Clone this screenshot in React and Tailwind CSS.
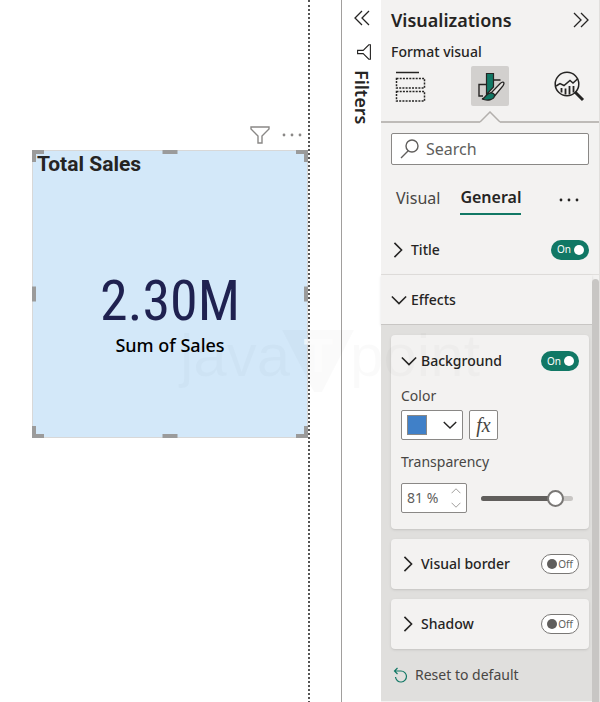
import React, { useState } from 'react';

const Chevron = ({ direction, className }) => {
  const paths = {
    right: "M5 1l8 8-8 8",
    down: "M1 5l8 8 8-8",
    up: "M1 13l8-8 8 8"
  };

  return (
    <svg className={className} fill="none" stroke="currentColor" viewBox="0 0 18 18">
      <path strokeWidth={1.8} d={paths[direction]} />
    </svg>
  );
};

const DoubleChevron = ({ left }) => (
  <svg className="w-4 h-4" fill="none" stroke="currentColor" strokeWidth={1.3} viewBox="0 0 16 16">
    <path d={left ? "M8 1L1 8l7 7M15 1L8 8l7 7" : "M1 1l7 7-7 7M8 1l7 7-7 7"} />
  </svg>
);

const Dots = () => (
  <svg className="w-5 h-4" fill="currentColor" viewBox="0 0 20 16">
    <circle cx="2" cy="8" r="1.4" />
    <circle cx="10" cy="8" r="1.4" />
    <circle cx="18" cy="8" r="1.4" />
  </svg>
);

const FieldsIcon = () => (
  <svg className="w-8 h-8" fill="none" stroke="#252423" viewBox="0 0 32 32">
    <path d="M1 2.500h23" strokeWidth="1.5" />
    <path d="M1.500 8.500h28v9.500h-28zM1.500 21.500h28v9.500h-28z" strokeWidth="1.5" strokeDasharray="2 1.200" />
  </svg>
);

const PaintIcon = () => (
  <svg className="w-8 h-8" fill="none" stroke="#252423" viewBox="0 0 32 32">
    <path d="M12 14.500H5V26h4M20 10h6.500" strokeWidth="1.4" />
    <path d="M12.500 3.500h7V17l-7 7.500z" fill="#117865" strokeWidth="1.2" />
    <path d="M29.500 12.300c1 .8.300 2.200-.4 3.400L21 25.500l-3.800-2.700 9-9.300c1.200-1.200 2.400-1.800 3.300-1.200z" fill="#e6e4e2" strokeWidth="1.3" />
    <path d="M16.500 22.800c2.300-.2 4.200 1.200 4 3.200-.7 3.800-7 5.200-12.500 3 3.700-.4 3.700-5.800 8.500-6.200z" fill="#117865" strokeWidth="1.3" />
  </svg>
);

const AnalyticsIcon = () => (
  <svg className="w-8 h-8" fill="none" stroke="#252423" viewBox="0 0 32 32">
    <circle cx="14" cy="14" r="11.800" strokeWidth="1.5" />
    <path d="M3 16l4-2.500 4 2 6-5 3 2.500 5-4.500" strokeWidth="1.5" />
    <path d="M8.500 18v4.500M12.500 18.500v6M16.500 16v8.500M20.500 16v6.500" strokeWidth="1.8" />
    <path d="M22 22l8 8" strokeWidth="3" />
  </svg>
);

const FilterIcon = ({ className }) => (
  <svg className={className} fill="none" stroke="currentColor" viewBox="0 0 20 18">
    <path strokeWidth={1.4} d="M1 1h18v2l-7 7v7H8v-7L1 3z" />
  </svg>
);

const Toggle = ({ label, defaultOn }) => {
  const [on, setOn] = useState(defaultOn);

  return (
    <button
      role="switch"
      aria-checked={on}
      aria-label={label}
      onClick={() => setOn(!on)}
      className={
        on
          ? "flex items-center justify-between w-[38px] h-5 pl-1.5 pr-[5px] rounded-full bg-[#117865] text-white text-[10px]"
          : "flex flex-row-reverse items-center justify-between w-[38px] h-5 px-[5px] rounded-full border border-[#797775] bg-white text-[#605e5c] text-[10px]"
      }
    >
      <span>{on ? 'On' : 'Off'}</span>
      <span className={on ? "w-2.5 h-2.5 rounded-full bg-white" : "w-2.5 h-2.5 rounded-full bg-[#605e5c]"} />
    </button>
  );
};

const CollapsedCard = ({ title }) => (
  <section className="flex items-center justify-between h-[50px] mt-2.5 pl-2 pr-2.5 rounded bg-[#f3f2f1] shadow">
    <button className="flex items-center gap-1 text-sm font-medium">
      <Chevron direction="right" className="w-[18px] h-4" />
      {title}
    </button>
    <Toggle label={title} defaultOn={false} />
  </section>
);

const handles = [
  "-top-px -left-px w-3 h-3 border-t-4 border-l-4",
  "-top-px -right-px w-3 h-3 border-t-4 border-r-4",
  "-bottom-px -left-px w-3 h-3 border-b-4 border-l-4",
  "-bottom-px -right-px w-3 h-3 border-b-4 border-r-4",
  "-top-px left-1/2 -translate-x-1/2 w-[15px] border-t-4",
  "-bottom-px left-1/2 -translate-x-1/2 w-[15px] border-t-4",
  "-left-px top-1/2 -translate-y-1/2 h-[15px] border-l-4",
  "-right-px top-1/2 -translate-y-1/2 h-[15px] border-l-4"
];

const Canvas = () => (
  <main className="flex-1 pt-[126px] pl-8 border-r-2 border-dotted border-[#555]">
    <div className="flex items-center justify-end gap-3 h-[18px] pr-1.5 mb-1.5 text-[#8a8886]">
      <button aria-label="Filters on visual"><FilterIcon className="w-5 h-[18px]" /></button>
      <button aria-label="More options"><Dots /></button>
    </div>
    <section className="relative flex flex-col h-72 border border-[#d8d8d8] bg-[#d3e8f9]">
      {handles.map((handle) => (
        <span key={handle} className={`absolute border-[#9b9b9b] ${handle}`} />
      ))}
      <h2 className="pl-1 text-[21px] leading-[26px] font-bold text-[#252423] font-[Roboto,sans-serif]">Total Sales</h2>
      <div className="mt-24 text-center">
        <p className="text-[56px] leading-[56px] text-[#1f2150] font-['Liberation_Sans_Narrow','Roboto_Condensed',Roboto,sans-serif]">2.30M</p>
        <p className="mt-1 text-lg leading-6 font-medium text-black">Sum of Sales</p>
      </div>
    </section>
  </main>
);

const FiltersPane = () => (
  <aside className="flex flex-col items-center w-10 ml-[31px] pt-2.5 border-l border-[#a19f9d] text-[#252423]">
    <button aria-label="Expand filters"><DoubleChevron left /></button>
    <FilterIcon className="w-4 h-4 mt-[18px] ml-1 rotate-90" />
    <h2 className="mt-2.5 text-lg leading-6 font-semibold [writing-mode:vertical-rl]">Filters</h2>
  </aside>
);

const Background = () => {
  const [transparency, setTransparency] = useState(81);

  return (
    <section className="h-[194px] px-2.5 pt-4 rounded bg-[#f3f2f1] shadow">
      <div className="flex items-center justify-between">
        <button className="flex items-center gap-1 text-sm leading-5 font-medium">
          <Chevron direction="down" className="w-4 h-4" />
          Background
        </button>
        <Toggle label="Background" defaultOn />
      </div>
      <p className="mt-[15px] text-sm leading-5 text-[#484644]">Color</p>
      <div className="flex gap-1.5 mt-1">
        <button aria-label="Color" className="flex items-center justify-between w-[62px] h-[30px] px-[5px] rounded-xs border border-[#8a8886] bg-white">
          <span className="w-5 h-5 border border-[#8a8886] bg-[#4080c8]" />
          <Chevron direction="down" className="w-3.5 h-3.5" />
        </button>
        <button aria-label="Conditional formatting" className="w-[29px] h-[30px] rounded-xs border border-[#8a8886] bg-white text-[#484644] font-['Liberation_Serif',serif] text-xl leading-6 italic">
          fx
        </button>
      </div>
      <label htmlFor="transparency" className="block mt-3 text-sm leading-5 text-[#484644]">Transparency</label>
      <div className="flex items-center mt-[11px]">
        <div className="flex items-center w-[66px] h-[30px] px-[5px] rounded-xs border border-[#8a8886] bg-white text-sm text-[#605e5c]">
          <input
            id="transparency"
            className="w-full min-w-0 outline-none"
            value={`${transparency} %`}
            onChange={(e) => setTransparency(Math.min(100, parseInt(e.target.value) || 0))}
          />
          <div className="flex flex-col gap-1 text-[#a19f9d]">
            <button aria-label="Increase" onClick={() => setTransparency(Math.min(100, transparency + 1))}>
              <Chevron direction="up" className="w-2.5 h-2.5" />
            </button>
            <button aria-label="Decrease" onClick={() => setTransparency(Math.max(0, transparency - 1))}>
              <Chevron direction="down" className="w-2.5 h-2.5" />
            </button>
          </div>
        </div>
        {/* the thumb may hang over both ends of the track */}
        <div className="relative flex flex-1 items-center h-[18px] ml-3.5 mr-1.5">
          <div className="w-full h-[5px] rounded-full overflow-hidden bg-[#c8c6c4]">
            <div className="h-full bg-[#605e5c]" style={{ width: `${transparency}%` }} />
          </div>
          <input
            type="range"
            aria-label="Transparency slider"
            min="0"
            max="100"
            value={transparency}
            onChange={(e) => setTransparency(Number(e.target.value))}
            className="absolute top-0 -left-2 w-[calc(100%+16px)] h-[18px] appearance-none bg-transparent [&::-webkit-slider-thumb]:appearance-none [&::-webkit-slider-thumb]:h-[17px] [&::-webkit-slider-thumb]:w-[17px] [&::-webkit-slider-thumb]:rounded-full [&::-webkit-slider-thumb]:border-2 [&::-webkit-slider-thumb]:border-[#797775] [&::-webkit-slider-thumb]:bg-white"
          />
        </div>
      </div>
    </section>
  );
};

const VisualizationsPane = () => (
  <aside className="flex flex-col w-[219px] bg-[#f3f2f1] border-r border-[#e1dfdd]">
    <div className="flex items-center justify-between px-2.5 pt-1.5">
      <h1 className="text-lg leading-7 font-semibold">Visualizations</h1>
      <button aria-label="Collapse pane"><DoubleChevron /></button>
    </div>
    <p className="pl-2.5 mt-2 text-sm leading-5 font-medium">Format visual</p>
    <div className="flex justify-between mt-1 px-2.5">
      <button aria-label="Build visual" className="flex items-center justify-center w-10 h-10"><FieldsIcon /></button>
      <button aria-label="Format visual" className="flex items-center justify-center w-[38px] h-10 rounded-xs bg-[#d2d0ce]"><PaintIcon /></button>
      <button aria-label="Analytics" className="flex items-center justify-center w-10 h-10"><AnalyticsIcon /></button>
    </div>
    <div className="flex items-end h-4 mt-px">
      <span className="flex-1 border-b-2 border-[#bebbb8]" />
      <svg className="w-5 h-3" fill="none" stroke="#b3b0ad" viewBox="0 0 20 12">
        <path strokeWidth="1.500" d="M0 11l10-10 10 10" />
      </svg>
      <span className="flex-1 border-b-2 border-[#bebbb8]" />
    </div>
    <label className="flex items-center gap-1.5 h-8 mt-2.5 mx-2.5 px-2 rounded-xs border border-[#8a8886] bg-white text-[#605e5c]">
      <svg className="w-5 h-5 shrink-0" fill="none" stroke="currentColor" viewBox="0 0 20 20">
        <path strokeWidth="1.400" d="M1 19l7-7M18 7a6 6 0 11-12 0 6 6 0 0112 0z" />
      </svg>
      <input aria-label="Search" placeholder="Search" className="w-full min-w-0 text-base leading-6 outline-none placeholder:text-[#605e5c]" />
    </label>
    <div className="flex items-center mt-5 pl-[15px] pr-5 text-base leading-6">
      <button className="pb-1 text-[#484644]">Visual</button>
      <button className="ml-5 pb-1 border-b-2 border-[#117865] font-semibold">General</button>
      <button aria-label="More options" className="ml-auto"><Dots /></button>
    </div>
    <div className="flex items-center justify-between h-[50px] pl-2 pr-2.5 border-b border-[#e1dfdd] mt-2.5">
      <button className="flex items-center gap-1 text-sm font-medium">
        <Chevron direction="right" className="w-[18px] h-4" />
        Title
      </button>
      <Toggle label="Title" defaultOn />
    </div>
    <div className="flex flex-1">
      <div className="flex flex-col flex-1 min-w-0">
        <div className="flex items-center h-[50px] pl-2.5 border-b border-[#c8c6c4] shadow-sm">
          <button className="flex items-center gap-1 text-sm font-medium">
            <Chevron direction="down" className="w-4 h-4" />
            Effects
          </button>
        </div>
        <div className="flex-1 pt-2.5 pb-4 pl-2.5 pr-[3px] bg-[#e0dfdd]">
          <Background />
          <CollapsedCard title="Visual border" />
          <CollapsedCard title="Shadow" />
          <button className="flex items-center gap-1.5 mt-4 pl-0.5 text-sm leading-5 text-[#484644]">
            <svg className="w-4 h-4" fill="none" stroke="#117865" viewBox="0 0 16 16">
              <path strokeWidth="1.200" d="M4.500 1L1.500 4l3 3M1.500 4H8a5.500 5.500 0 11-5.500 6" />
            </svg>
            Reset to default
          </button>
        </div>
        <div className="h-0.5 bg-[#f3f2f1]" />
      </div>
      <div className="w-[7px] mt-1 rounded-t-full bg-[#c8c6c4]" />
    </div>
  </aside>
);

const Watermark = () => (
  <div className="pointer-events-none absolute top-[316px] left-[180px] flex items-start text-[60px] leading-[80px] text-black/2 font-['Liberation_Sans',sans-serif]">
    <span>java</span>
    <div className="relative -ml-2">
      <svg className="w-[72px] h-[62px] mt-3.5" fill="currentColor" viewBox="0 0 72 62">
        <path d="M0 0h72L40 62h-8z" />
      </svg>
      <span className="absolute top-4 inset-x-0 text-center text-5xl leading-12 font-bold text-white/60">T</span>
    </div>
    <span className="-ml-1">point</span>
  </div>
);

function App() {
  return (
    <div className="relative flex min-h-screen overflow-hidden bg-white text-[#252423] font-['Noto_Sans',sans-serif]">
      <Canvas />
      <FiltersPane />
      <VisualizationsPane />
      <Watermark />
    </div>
  );
}

export default App;
